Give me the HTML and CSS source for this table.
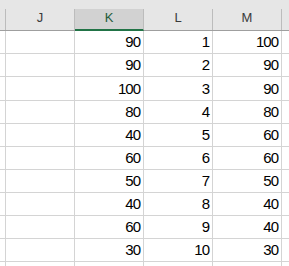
FILE: index.html
```html
<!DOCTYPE html>
<html>
<head>
<meta charset="utf-8">
<link rel="stylesheet" href="styles.css">
</head>
<body>
<div class="sheet">
  <div class="topstrip"></div>
  <div class="row head">
    <div class="c edge"></div>
    <div class="c col">J</div>
    <div class="c col sel">K</div>
    <div class="c col">L</div>
    <div class="c col">M</div>
    <div class="c tail"></div>
  </div>
  <div class="row"><div class="c edge"></div><div class="c"></div><div class="c n">90</div><div class="c n">1</div><div class="c n">100</div><div class="c tail"></div></div>
  <div class="row"><div class="c edge"></div><div class="c"></div><div class="c n">90</div><div class="c n">2</div><div class="c n">90</div><div class="c tail"></div></div>
  <div class="row tall"><div class="c edge"></div><div class="c"></div><div class="c n">100</div><div class="c n">3</div><div class="c n">90</div><div class="c tail"></div></div>
  <div class="row"><div class="c edge"></div><div class="c"></div><div class="c n">80</div><div class="c n">4</div><div class="c n">80</div><div class="c tail"></div></div>
  <div class="row"><div class="c edge"></div><div class="c"></div><div class="c n">40</div><div class="c n">5</div><div class="c n">60</div><div class="c tail"></div></div>
  <div class="row"><div class="c edge"></div><div class="c"></div><div class="c n">60</div><div class="c n">6</div><div class="c n">60</div><div class="c tail"></div></div>
  <div class="row"><div class="c edge"></div><div class="c"></div><div class="c n">50</div><div class="c n">7</div><div class="c n">50</div><div class="c tail"></div></div>
  <div class="row"><div class="c edge"></div><div class="c"></div><div class="c n">40</div><div class="c n">8</div><div class="c n">40</div><div class="c tail"></div></div>
  <div class="row"><div class="c edge"></div><div class="c"></div><div class="c n">60</div><div class="c n">9</div><div class="c n">40</div><div class="c tail"></div></div>
  <div class="row"><div class="c edge"></div><div class="c"></div><div class="c n">30</div><div class="c n">10</div><div class="c n">30</div><div class="c tail"></div></div>
  <div class="row stub"><div class="c edge"></div><div class="c"></div><div class="c"></div><div class="c"></div><div class="c"></div><div class="c tail"></div></div>
</div>
</body>
</html>
```
FILE: styles.css
```css
* { box-sizing: border-box; }
html, body { margin: 0; padding: 0; background: #ffffff; }
.sheet {
  width: 289px;
  height: 266px;
  overflow: hidden;
  font-family: "Liberation Sans", Arial, sans-serif;
}
.topstrip { height: 9px; background: #e6e6e6; }
.row {
  display: flex;
  height: 23px;
  border-bottom: 1px solid #d4d4d4;
}
.row.tall { height: 24px; }
.row.stub { height: 5px; border-bottom: none; }
.c {
  width: 69px;
  flex: none;
  border-right: 1px solid #d4d4d4;
}
.c.edge { width: 6px; }
.c.tail { width: 7px; border-right: none; }
.n {
  display: flex;
  justify-content: flex-end;
  align-items: flex-end;
  padding: 0 3px 3px 0;
  font-size: 15px;
  line-height: 17px;
  letter-spacing: -1px;
  color: #000000;
}
.row.head {
  height: 22px;
  background: #e6e6e6;
  border-bottom: 1px solid #9f9f9f;
}
.row.head .c { border-right-color: #bcbcbc; }
.col {
  text-align: center;
  font-size: 13px;
  line-height: 17px;
  color: #3a3a3a;
}
.col.sel {
  background: #d2d2d2;
  color: #1f5b3a;
  border-bottom: 2px solid #217346;
  margin-bottom: -1px;
  height: 22px;
}
```
